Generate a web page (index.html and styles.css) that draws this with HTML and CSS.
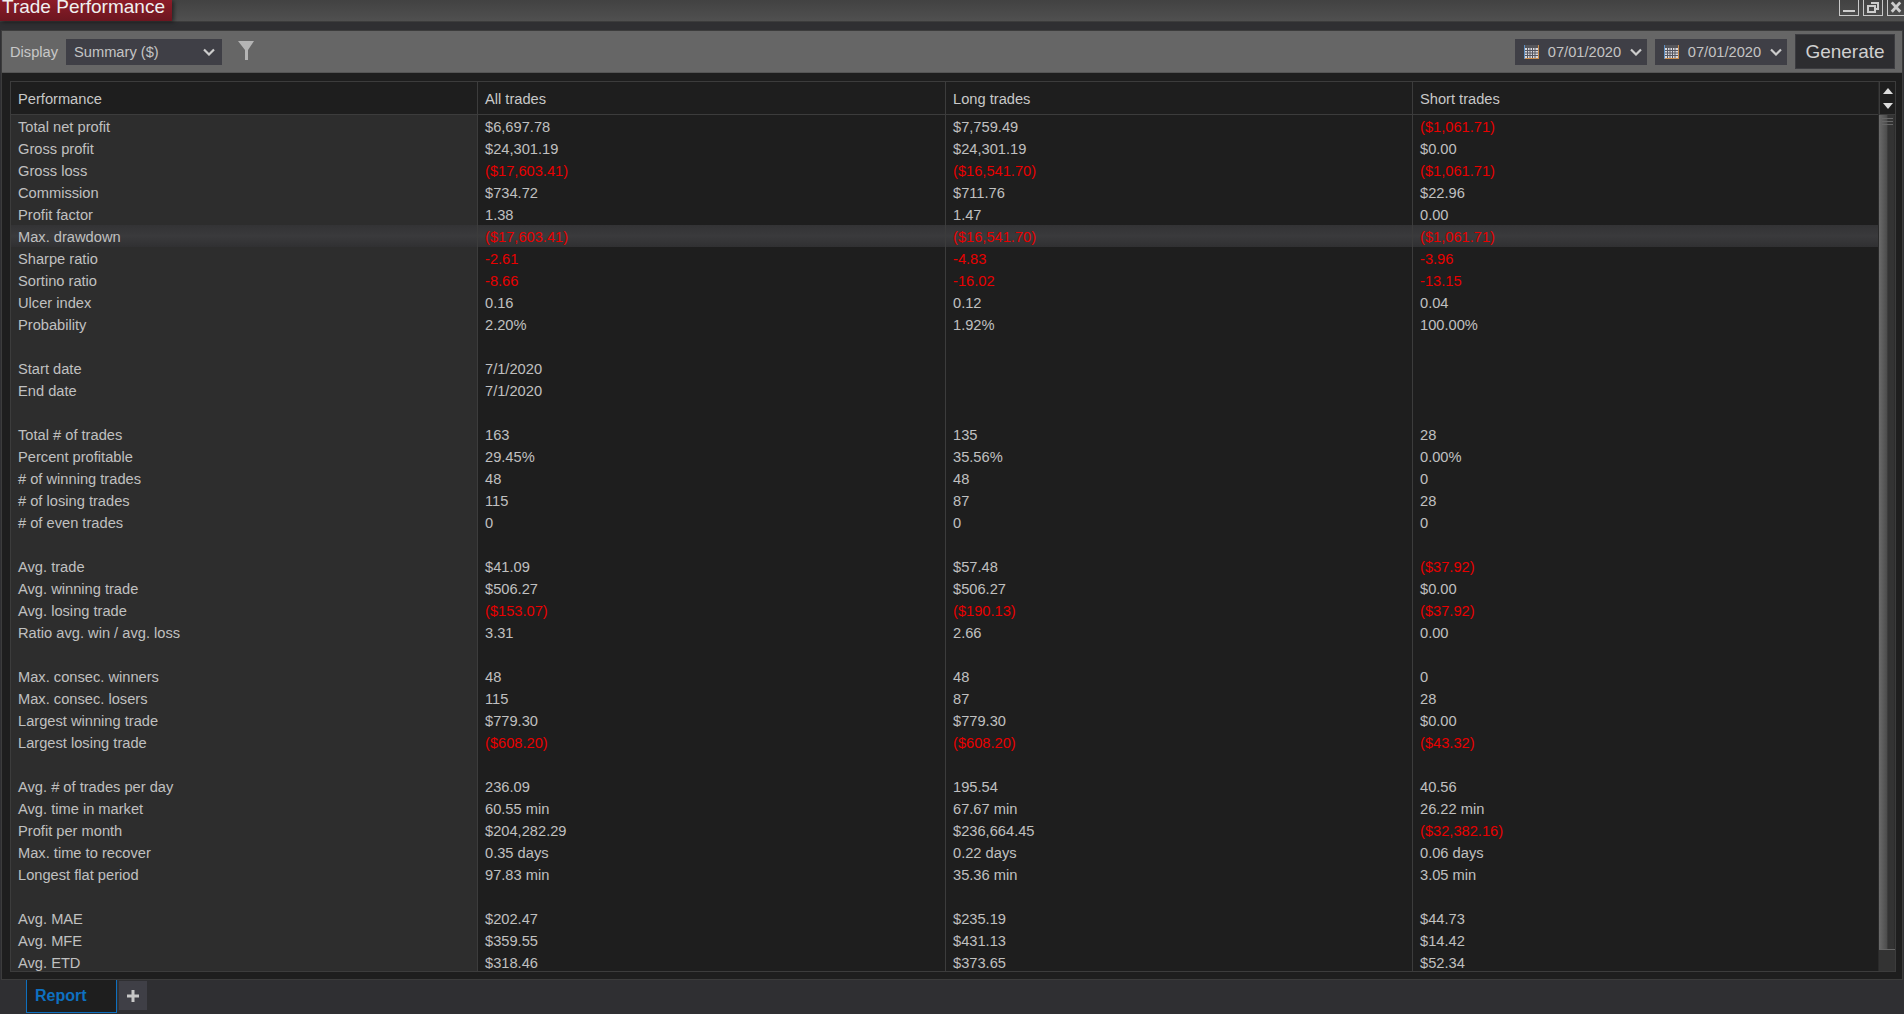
FILE: index.html
```html
<!DOCTYPE html>
<html lang="en">

<head>
	<meta charset="UTF-8">
	<title>Trade Performance</title>
	<link rel="stylesheet" href="styles.css">
</head>

<body>
	<header class="titlebar">
		<div class="title">Trade Performance</div>
		<div class="win-buttons">
			<div class="win-btn win-min"><svg width="18" height="15" viewBox="0 0 18 15"><path d="M3 11h12" stroke="#ccc" stroke-width="2"/></svg></div>
			<div class="win-btn win-restore"><svg width="18" height="15" viewBox="0 0 18 15" fill="none" stroke="#ccc" stroke-width="2"><path d="M7 3h7v6h-3"/><rect x="4" y="6" width="7" height="6"/></svg></div>
			<div class="win-btn win-close"><svg width="17" height="15" viewBox="0 0 17 15"><path d="M4 2l9 10M13 2l-9 10" stroke="#ccc" stroke-width="3"/></svg></div>
		</div>
	</header>

	<main class="window">
		<div class="toolbar">
			<span class="display-label">Display</span>
			<div class="dropdown dropdown-display">
				<span>Summary ($)</span>
				<svg class="chevron" width="12" height="8" viewBox="0 0 12 8"><path d="M1 1.500l5 5 5-5" fill="none" stroke="#ccc" stroke-width="2.200"/></svg>
			</div>
			<svg class="funnel" width="16" height="19" viewBox="0 0 16 19"><path d="M0 0h16l-6 9v10h-3v-10z" fill="#b4b4b4"/></svg>
			<div class="spacer"></div>
			<div class="dropdown dropdown-date">
				<svg class="calendar" width="15" height="14" viewBox="0 0 15 14"><rect width="15" height="14" fill="#5a8fc4"/><rect x="1" y="0" width="14" height="14" fill="#c98a4a"/><rect x="1" y="0" width="13" height="3" fill="#55555a"/><rect x="1" y="3" width="13" height="10" fill="#d8d8dc"/><path d="M1 5.500h13M1 8h13M1 10.500h13M3.500 3v10M6 3v10M8.500 3v10M11 3v10" stroke="#55555f" stroke-width="1"/></svg>
				<span>07/01/2020</span>
				<svg class="chevron" width="12" height="8" viewBox="0 0 12 8"><path d="M1 1.500l5 5 5-5" fill="none" stroke="#ccc" stroke-width="2.200"/></svg>
			</div>
			<div class="dropdown dropdown-date">
				<svg class="calendar" width="15" height="14" viewBox="0 0 15 14"><rect width="15" height="14" fill="#5a8fc4"/><rect x="1" y="0" width="14" height="14" fill="#c98a4a"/><rect x="1" y="0" width="13" height="3" fill="#55555a"/><rect x="1" y="3" width="13" height="10" fill="#d8d8dc"/><path d="M1 5.500h13M1 8h13M1 10.500h13M3.500 3v10M6 3v10M8.500 3v10M11 3v10" stroke="#55555f" stroke-width="1"/></svg>
				<span>07/01/2020</span>
				<svg class="chevron" width="12" height="8" viewBox="0 0 12 8"><path d="M1 1.500l5 5 5-5" fill="none" stroke="#ccc" stroke-width="2.200"/></svg>
			</div>
			<button class="generate">Generate</button>
		</div>

		<div class="grid-wrap">
			<div class="grid-frame">
				<div class="grid-clip">
					<table class="perf">
						<thead>
							<tr><th>Performance</th><th>All trades</th><th>Long trades</th><th>Short trades</th></tr>
						</thead>
						<tbody>
							<tr><td>Total net profit</td><td>$6,697.78</td><td>$7,759.49</td><td class="neg">($1,061.71)</td></tr>
							<tr><td>Gross profit</td><td>$24,301.19</td><td>$24,301.19</td><td>$0.00</td></tr>
							<tr><td>Gross loss</td><td class="neg">($17,603.41)</td><td class="neg">($16,541.70)</td><td class="neg">($1,061.71)</td></tr>
							<tr><td>Commission</td><td>$734.72</td><td>$711.76</td><td>$22.96</td></tr>
							<tr><td>Profit factor</td><td>1.38</td><td>1.47</td><td>0.00</td></tr>
							<tr class="hover"><td>Max. drawdown</td><td class="neg">($17,603.41)</td><td class="neg">($16,541.70)</td><td class="neg">($1,061.71)</td></tr>
							<tr><td>Sharpe ratio</td><td class="neg">-2.61</td><td class="neg">-4.83</td><td class="neg">-3.96</td></tr>
							<tr><td>Sortino ratio</td><td class="neg">-8.66</td><td class="neg">-16.02</td><td class="neg">-13.15</td></tr>
							<tr><td>Ulcer index</td><td>0.16</td><td>0.12</td><td>0.04</td></tr>
							<tr><td>Probability</td><td>2.20%</td><td>1.92%</td><td>100.00%</td></tr>
							<tr><td></td><td></td><td></td><td></td></tr>
							<tr><td>Start date</td><td>7/1/2020</td><td></td><td></td></tr>
							<tr><td>End date</td><td>7/1/2020</td><td></td><td></td></tr>
							<tr><td></td><td></td><td></td><td></td></tr>
							<tr><td>Total # of trades</td><td>163</td><td>135</td><td>28</td></tr>
							<tr><td>Percent profitable</td><td>29.45%</td><td>35.56%</td><td>0.00%</td></tr>
							<tr><td># of winning trades</td><td>48</td><td>48</td><td>0</td></tr>
							<tr><td># of losing trades</td><td>115</td><td>87</td><td>28</td></tr>
							<tr><td># of even trades</td><td>0</td><td>0</td><td>0</td></tr>
							<tr><td></td><td></td><td></td><td></td></tr>
							<tr><td>Avg. trade</td><td>$41.09</td><td>$57.48</td><td class="neg">($37.92)</td></tr>
							<tr><td>Avg. winning trade</td><td>$506.27</td><td>$506.27</td><td>$0.00</td></tr>
							<tr><td>Avg. losing trade</td><td class="neg">($153.07)</td><td class="neg">($190.13)</td><td class="neg">($37.92)</td></tr>
							<tr><td>Ratio avg. win / avg. loss</td><td>3.31</td><td>2.66</td><td>0.00</td></tr>
							<tr><td></td><td></td><td></td><td></td></tr>
							<tr><td>Max. consec. winners</td><td>48</td><td>48</td><td>0</td></tr>
							<tr><td>Max. consec. losers</td><td>115</td><td>87</td><td>28</td></tr>
							<tr><td>Largest winning trade</td><td>$779.30</td><td>$779.30</td><td>$0.00</td></tr>
							<tr><td>Largest losing trade</td><td class="neg">($608.20)</td><td class="neg">($608.20)</td><td class="neg">($43.32)</td></tr>
							<tr><td></td><td></td><td></td><td></td></tr>
							<tr><td>Avg. # of trades per day</td><td>236.09</td><td>195.54</td><td>40.56</td></tr>
							<tr><td>Avg. time in market</td><td>60.55 min</td><td>67.67 min</td><td>26.22 min</td></tr>
							<tr><td>Profit per month</td><td>$204,282.29</td><td>$236,664.45</td><td class="neg">($32,382.16)</td></tr>
							<tr><td>Max. time to recover</td><td>0.35 days</td><td>0.22 days</td><td>0.06 days</td></tr>
							<tr><td>Longest flat period</td><td>97.83 min</td><td>35.36 min</td><td>3.05 min</td></tr>
							<tr><td></td><td></td><td></td><td></td></tr>
							<tr><td>Avg. MAE</td><td>$202.47</td><td>$235.19</td><td>$44.73</td></tr>
							<tr><td>Avg. MFE</td><td>$359.55</td><td>$431.13</td><td>$14.42</td></tr>
							<tr><td>Avg. ETD</td><td>$318.46</td><td>$373.65</td><td>$52.34</td></tr>
						</tbody>
					</table>
				</div>
				<div class="scrollbar">
					<div class="scroll-arrows">
						<svg width="10" height="6" viewBox="0 0 10 6"><path d="M5 0l5 6h-10z" fill="#ddd"/></svg>
						<svg width="10" height="6" viewBox="0 0 10 6"><path d="M0 0h10l-5 6z" fill="#ddd"/></svg>
					</div>
					<div class="scroll-thumb">
						<div class="thumb-grip"></div>
						<div class="thumb-grip"></div>
						<div class="thumb-grip"></div>
					</div>
					<div class="scroll-rest"></div>
				</div>
			</div>
		</div>
	</main>

	<footer class="tabbar">
		<div class="tab">Report</div>
		<div class="tab-add"><svg width="14" height="14" viewBox="0 0 14 14"><path d="M7 1v12M1 7h12" stroke="#c8c8c8" stroke-width="3"/></svg></div>
	</footer>
</body>

</html>
```
FILE: styles.css
```css
html, body {
	height: 100%;
}

body {
	margin: 0;
	height: 1014px;
	overflow: hidden;
	display: flex;
	flex-direction: column;
	background-color: #2f2f32;
	font-family: "Liberation Sans", Arial, sans-serif;
	font-size: 14.67px;
	color: #c0c0c0;
}

/* title bar */
.titlebar {
	height: 21px;
	flex: none;
	display: flex;
	justify-content: space-between;
	background: linear-gradient(#424242, #505050);
	border-bottom: 1px solid #3c3c3c;
	margin-bottom: 8px;
}

.title {
	width: 170px;
	height: 21px;
	padding-left: 2px;
	font-size: 19px;
	line-height: 14px;
	color: #f0f0f0;
	background: linear-gradient(#8c1c28, #6c1620);
	box-shadow: 2px 1px 4px rgba(0, 0, 0, 0.5);
	overflow: hidden;
}

.win-buttons {
	display: flex;
	gap: 4px;
}

.win-btn {
	height: 15px;
	border: 1px solid #c8c8c8;
	border-top: none;
	display: flex;
}

.win-min {
	width: 18px;
}

.win-restore {
	width: 18px;
}

.win-close {
	width: 16px;
	border-right: none;
}

/* main window */
.window {
	height: 950px;
	flex: none;
	box-sizing: border-box;
	margin: 0 1px 0 1px;
	display: flex;
	flex-direction: column;
	background-color: #1e1e1e;
	border: 1px solid #3c3c3c;
}

.toolbar {
	height: 42px;
	flex: none;
	box-sizing: border-box;
	display: flex;
	align-items: center;
	padding: 0 7px 0 8px;
	background-color: #666666;
	border-bottom: 1px solid #555555;
}

.display-label {
	width: 56px;
	flex: none;
	color: #c8c8c8;
}

.dropdown {
	height: 26px;
	box-sizing: border-box;
	display: flex;
	align-items: center;
	justify-content: space-between;
	margin-top: 1px;
	background-color: #3f3f46;
	color: #c4c4c4;
}

.dropdown-display {
	width: 156px;
	padding: 0 7px 0 8px;
}

.funnel {
	margin-left: 16px;
	margin-top: -2px;
}

.spacer {
	flex: 1;
}

.dropdown-date {
	width: 132px;
	padding: 0 5px 0 9px;
	margin-right: 8px;
}

.chevron {
	flex: none;
}

.calendar {
	flex: none;
}

.generate {
	width: 100px;
	height: 35px;
	padding: 0;
	font-family: inherit;
	font-size: 19px;
	color: #d0d0d0;
	background-color: #2d2d30;
	border: 1px solid #3c3c40;
}

/* grid */
.grid-wrap {
	flex: 1;
	padding: 8px 6px 7px 8px;
	min-height: 0;
}

.grid-frame {
	height: 100%;
	box-sizing: border-box;
	display: flex;
	border: 1px solid #3c3c3c;
}

.grid-clip {
	flex: 1;
	overflow: hidden;
}

.perf {
	width: 100%;
	table-layout: fixed;
	border-collapse: separate;
	border-spacing: 0;
}

.perf th,
.perf td {
	padding: 2px 0 0 7px;
	height: 22px;
	box-sizing: border-box;
	font-weight: normal;
	text-align: left;
	white-space: nowrap;
	border-left: 1px solid #3c3c3c;
	background-color: #1e1e1e;
}

.perf th {
	height: 33px;
	padding-top: 1px;
	color: #c8c8c8;
	border-bottom: 1px solid #3c3c3c;
}

.perf th:nth-child(1) {
	width: 466px;
}

.perf th:nth-child(2) {
	width: 468px;
}

.perf th:nth-child(3) {
	width: 467px;
}

.perf th:first-child,
.perf td:first-child {
	border-left: none;
}

.perf td:first-child {
	background-color: #2d2d2d;
}

.perf .neg {
	color: #e80000;
}

.perf .hover td,
.perf .hover td:first-child {
	background: linear-gradient(#333335, #3a3a3c 50%, #303032);
}

/* scrollbar */
.scrollbar {
	width: 16px;
	flex: none;
	display: flex;
	flex-direction: column;
	border-left: 1px solid #2a2a2a;
}

.scroll-arrows {
	height: 33px;
	flex: none;
	box-sizing: border-box;
	display: flex;
	flex-direction: column;
	align-items: center;
	justify-content: center;
	gap: 9px;
	border-bottom: 1px solid #3c3c3c;
	border-left: 1px solid #3c3c3c;
}

.scroll-thumb {
	height: 835px;
	flex: none;
	box-sizing: border-box;
	padding-top: 3px;
	background: linear-gradient(90deg, #6a6a6a, #4c4c4c 50%, #333 55%, #333 90%, #2a2a2a);
	border-bottom: 1px solid #666;
}

.thumb-grip {
	height: 1px;
	margin: 0 2px 2px 3px;
	background-color: #666;
}

.scroll-rest {
	flex: 1;
	background-color: #333333;
}

/* bottom tabs */
.tabbar {
	flex: 1;
	display: flex;
	align-items: flex-start;
	padding-left: 26px;
	gap: 2px;
}

.tab {
	width: 91px;
	height: 33px;
	box-sizing: border-box;
	padding: 7px 0 0 8px;
	font-size: 16px;
	font-weight: bold;
	color: #0e70c0;
	background-color: #1e1e1e;
	border: 1px solid #0e70c0;
	border-top: none;
}

.tab-add {
	width: 28px;
	height: 29px;
	display: flex;
	align-items: center;
	justify-content: center;
	margin-top: 1px;
	background-color: #3f3f46;
}
```
